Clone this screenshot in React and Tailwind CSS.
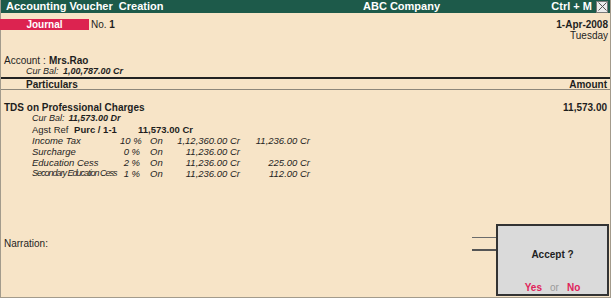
import React from 'react';

const taxRows = [
  { name: 'Income Tax', pct: '10 %', base: '1,12,360.00 Cr', amt: '11,236.00 Cr' },
  { name: 'Surcharge', pct: '0 %', base: '11,236.00 Cr', amt: '' },
  { name: 'Education Cess', pct: '2 %', base: '11,236.00 Cr', amt: '225.00 Cr' },
  { name: 'Secondary Education Cess', pct: '1 %', base: '11,236.00 Cr', amt: '112.00 Cr', narrow: true },
];

function TaxRow({ row }) {
  return (
    <div className="flex h-[11px] items-center pl-[31px] text-[9.5px] italic leading-[11px] whitespace-nowrap">
      <span className={`w-[88px] ${row.narrow ? 'text-[9px] tracking-[-1px]' : ''}`}>{row.name}</span>
      <span className="w-[20px] text-right">{row.pct}</span>
      <span className="ml-[10px] w-[20px]">On</span>
      <span className="w-[70px] text-right">{row.base}</span>
      <span className="w-[70px] text-right">{row.amt}</span>
    </div>
  );
}

export default function App() {
  return (
    <div className="relative flex h-[298px] w-[611px] flex-col border-x border-b border-[#a39b8c] bg-[#f7e4c7] font-['Liberation_Sans',Arial,sans-serif] text-[10px] text-[#1e1e1e] whitespace-nowrap">
      {/* Title bar */}
      <div className="flex h-[13px] items-center bg-[#1d5a4a] text-[11px] font-bold leading-[13px] text-white">
        <span className="w-[362px] shrink-0 pl-[5px]">Accounting Voucher&nbsp; Creation</span>
        <span>ABC Company</span>
        <span className="ml-auto">Ctrl + M</span>
        <span className="ml-[4px] mr-[2px] flex h-[12px] w-[12px] items-center justify-center border border-[#7a7a7a] bg-[#ececec]">
          <svg width="9" height="9" viewBox="0 0 9 9">
            <path d="M0.5 0.5 L8.5 8.5 M8.5 0.5 L0.5 8.5" stroke="#555" strokeWidth="1" />
          </svg>
        </span>
      </div>

      {/* Voucher type / date */}
      <div className="mt-[6px] flex h-[11px] items-center leading-[11px]">
        <div className="-ml-px h-[11px] w-[89px] bg-[#dc2350] text-center font-bold text-white">Journal</div>
        <span className="ml-[2px]">No. <b>1</b></span>
        <span className="ml-auto pr-[2px] font-bold">1-Apr-2008</span>
      </div>
      <div className="h-[11px] pr-[2px] text-right leading-[11px]">Tuesday</div>

      {/* Account */}
      <div className="mt-[14px] flex h-[11px] items-center pl-[3px] leading-[11px]">
        <span className="w-[45px]">Account :</span>
        <span className="font-bold">Mrs.Rao</span>
      </div>
      <div className="flex h-[11px] items-center pl-[25px] text-[9px] italic leading-[11px]">
        <span className="w-[37px]">Cur Bal:</span>
        <span className="font-bold">1,00,787.00 Cr</span>
      </div>

      {/* Column header */}
      <div className="h-[2px] bg-[#222]" />
      <div className="flex h-[10px] items-center justify-between pl-[25px] pr-[3px] font-bold leading-[11px]">
        <span>Particulars</span>
        <span>Amount</span>
      </div>
      <div className="h-px bg-[#8d877b]" />

      {/* Entry */}
      <div className="mt-[12px] flex h-[11px] items-center justify-between pl-[3px] pr-[3px] font-bold leading-[11px]">
        <span>TDS on Professional Charges</span>
        <span>11,573.00</span>
      </div>
      <div className="flex h-[11px] items-center gap-[4px] pl-[31px] text-[9px] italic leading-[11px]">
        <span>Cur Bal:</span>
        <span className="font-bold">11,573.00 Dr</span>
      </div>
      <div className="flex h-[11px] items-center pl-[31px] text-[9.5px] leading-[11px]">
        <span className="w-[106px]">
          Agst Ref <b className="ml-[3px]">Purc / 1-1</b>
        </span>
        <span className="font-bold">11,573.00 Cr</span>
      </div>
      {taxRows.map((row) => (
        <TaxRow key={row.name} row={row} />
      ))}

      <div className="mt-[59px] h-[11px] pl-[3px] leading-[11px]">Narration:</div>

      {/* Accept dialog */}
      <div className="absolute left-[471px] top-[237px] h-px w-[25px] bg-[#6b6b6b]" />
      <div className="absolute left-[471px] top-[249px] h-[2px] w-[25px] bg-[#555]" />
      <div className="absolute left-[495px] top-[224px] flex h-[72px] w-[113px] flex-col border-2 border-[#333] bg-[#dadada]">
        <div className="mt-[23px] h-[11px] text-center font-bold leading-[11px]">Accept ?</div>
        <div className="mt-[22px] flex h-[11px] items-center justify-center gap-[8px] leading-[11px]">
          <span className="font-bold text-[#e0245a]">Yes</span>
          <span className="text-[#9a9a9a]">or</span>
          <span className="font-bold text-[#e0245a]">No</span>
        </div>
      </div>
    </div>
  );
}
